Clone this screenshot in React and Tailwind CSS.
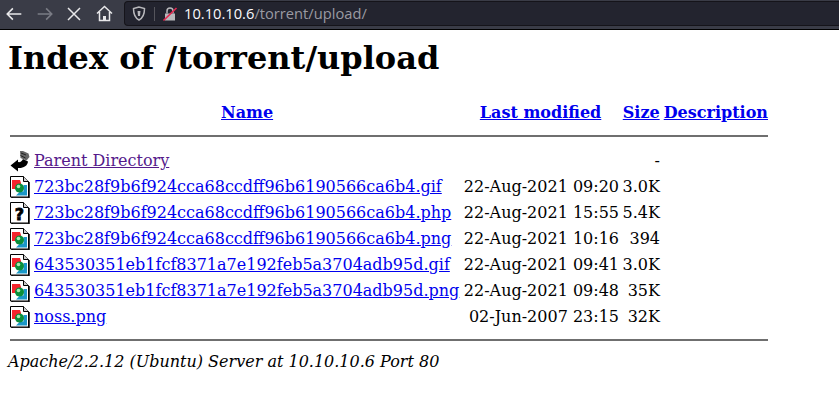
import React from 'react';

const rows = [
  { icon: 'image', name: '723bc28f9b6f924cca68ccdff96b6190566ca6b4.gif', date: '22-Aug-2021 09:20', size: '3.0K' },
  { icon: 'unknown', name: '723bc28f9b6f924cca68ccdff96b6190566ca6b4.php', date: '22-Aug-2021 15:55', size: '5.4K' },
  { icon: 'image', name: '723bc28f9b6f924cca68ccdff96b6190566ca6b4.png', date: '22-Aug-2021 10:16', size: '394' },
  { icon: 'image', name: '643530351eb1fcf8371a7e192feb5a3704adb95d.gif', date: '22-Aug-2021 09:41', size: '3.0K' },
  { icon: 'image', name: '643530351eb1fcf8371a7e192feb5a3704adb95d.png', date: '22-Aug-2021 09:48', size: '35K' },
  { icon: 'image', name: 'noss.png', date: '02-Jun-2007 23:15', size: '32K' },
];

const Sheet = ({ children }) => (
  <svg width="20" height="22" viewBox="0 0 20 22" className="shrink-0">
    <path d="M0.500 0.500H13.500L18.500 5.500V21H0.500Z" fill="#fff" stroke="#000" />
    <path d="M13.500 0.500V5.500H18.500" fill="#ccc" stroke="#000" />
    <path d="M19 6V22H2V21" fill="none" stroke="#000" strokeWidth="1.500" />
    {children}
  </svg>
);

const ImageIcon = () => (
  <Sheet>
    <path d="M2 4H10L11 7V10H7V13H2Z" fill="#f4242c" />
    <path d="M17 9V19.500H6L10 15.500H13.500V9Z" fill="#1a98c8" />
    <circle cx="9.500" cy="12" r="4.500" fill="#0a8f3a" />
    <circle cx="8.500" cy="10.500" r="1.800" fill="#a8e8b0" />
  </Sheet>
);

// the "?" sheet stays real text, thickened with a stroke instead of a bigger size
const UnknownIcon = () => (
  <svg width="20" height="22" viewBox="0 0 20 22" className="shrink-0">
    <path d="M0.500 0.500H13.500L18.500 5.500V21H0.500Z" fill="#fff" stroke="#000" />
    <path d="M13.500 0.500V5.500H18.500" fill="#ccc" stroke="#000" />
    <path d="M19 6V22H2V21" fill="none" stroke="#000" strokeWidth="1.500" />
    <text x="9.500" y="17.500" textAnchor="middle" fontFamily="'DejaVu Sans', sans-serif" fontWeight="700" fontSize="16" fill="#000" stroke="#000" strokeWidth="0.800">?</text>
  </svg>
);

const BackIcon = () => (
  <svg width="20" height="22" viewBox="0 0 20 22" className="shrink-0">
    <path d="M0.500 15.500L8 9.500V12C10 12.500 12 11.500 13 9L18 11.500C17.500 16 13 18.500 8 18V21.500Z" fill="#000" />
    <path d="M10 1H13L18.500 3.500L19.500 7L16.500 10.500L10.500 8Z" fill="#666" />
    <path d="M11 3L16 5M10.500 5.500L15.500 8" stroke="#222" strokeWidth="1" />
  </svg>
);

export default function App() {
  return (
    <div className="h-[415px] w-[839px] overflow-hidden bg-white font-['DejaVu_Serif',serif] text-[16px] text-black">
      <div className="flex h-[30px] items-start border-b border-black bg-[#3a3c47] pt-px text-[#fbfbfe]">
        <div className="flex h-[25px] w-[124px] shrink-0 items-center">
          <svg className="ml-[5px]" width="18" height="18" viewBox="0 0 16 16" fill="none" stroke="#e8e8ea" strokeWidth="1.4">
            <path d="M14.500 8H2M7 3L2 8l5 5" />
          </svg>
          <svg className="ml-[13px]" width="18" height="18" viewBox="0 0 16 16" fill="none" stroke="#7a7c85" strokeWidth="1.4">
            <path d="M1.500 8H14M9 3l5 5-5 5" />
          </svg>
          <svg className="ml-[12px]" width="16" height="16" viewBox="0 0 16 16" fill="none" stroke="#e8e8ea" strokeWidth="1.5">
            <path d="M2 2l12 12M14 2L2 14" />
          </svg>
          <svg className="ml-[14px]" width="17" height="17" viewBox="0 0 17 17" fill="none" stroke="#e8e8ea" strokeWidth="1.500">
            <path d="M1 8.500L8.500 1.500 16 8.500M3.500 7V15.500H13.500V7" />
            <path d="M7 15.500V11H10V15.500" fill="#e8e8ea" stroke="none" />
          </svg>
        </div>
        <div className="flex h-[25px] w-[715px] shrink-0 items-center rounded-l-[4px] border border-r-0 border-[#15141a] bg-[#23242f] font-['Open_Sans',sans-serif] text-[14.7px]">
          <svg className="ml-[7px]" width="14" height="15" viewBox="0 0 14 15">
            <path d="M7 1L1.500 2.500C1.500 8 3 12 7 14c4-2 5.500-6 5.500-11.500z" fill="none" stroke="#b8b8bc" strokeWidth="1.500" />
            <path d="M5.500 5h3L8 10H6z" fill="#b8b8bc" />
          </svg>
          <div className="ml-[8px] h-[14px] w-px bg-[#55555c]" />
          <svg className="ml-[7px]" width="16" height="16" viewBox="0 0 16 16">
            <path d="M3 7.500h10V14.500H3z" fill="#b8b8bc" />
            <path d="M5 7.500V5a3 3 0 016 0v2.500" fill="none" stroke="#b8b8bc" strokeWidth="1.500" />
            <path d="M1.500 14.500L14.500 2" stroke="#e22850" strokeWidth="1.700" />
          </svg>
          <span className="ml-[6px] text-[#fbfbfe]">10.10.10.6</span>
          <span className="text-[#9a9aa2]">/torrent/upload/</span>
        </div>
      </div>

      <div className="px-2">
        <h1 className="mt-[9px] text-[32px] font-bold leading-[38px]">Index of /torrent/upload</h1>
        <div className="mt-[26px] w-[760px] pl-[2px]">
          <div className="flex h-[20px] items-center font-bold">
            <a href="#" className="w-[452px] pl-[211px] text-[#0000ee] underline">Name</a>
            <a href="#" className="w-[161px] pl-[18px] whitespace-nowrap text-[#0000ee] underline">Last modified</a>
            <a href="#" className="w-[41px] text-[#0000ee] underline">Size</a>
            <a href="#" className="text-[#0000ee] underline">Description</a>
          </div>
          <hr className="mt-[12px] h-[2px] border-0 bg-[#6f6f6f]" />
          <div className="mt-[11px]">
            <div className="flex h-[26px] items-center">
              <div className="flex w-[452px] items-center gap-[4px]">
                <BackIcon />
                <a href="#" className="text-[#551a8b] underline">Parent Directory</a>
              </div>
              <span className="w-[157px]" />
              <span className="w-[41px] text-right">-</span>
            </div>
            {rows.map((row) => (
              <div key={row.name} className="flex h-[26px] items-center">
                <div className="flex w-[452px] items-center gap-[4px]">
                  {row.icon === 'image' ? <ImageIcon /> : <UnknownIcon />}
                  <a href="#" className="text-[#0000ee] underline">{row.name}</a>
                </div>
                <span className="w-[157px] whitespace-nowrap text-right">{row.date}</span>
                <span className="w-[41px] text-right">{row.size}</span>
              </div>
            ))}
          </div>
          <hr className="mt-[9px] h-[2px] border-0 bg-[#6f6f6f]" />
        </div>
        <div className="mt-[9px] italic">Apache/2.2.12 (Ubuntu) Server at 10.10.10.6 Port 80</div>
      </div>
    </div>
  );
}
